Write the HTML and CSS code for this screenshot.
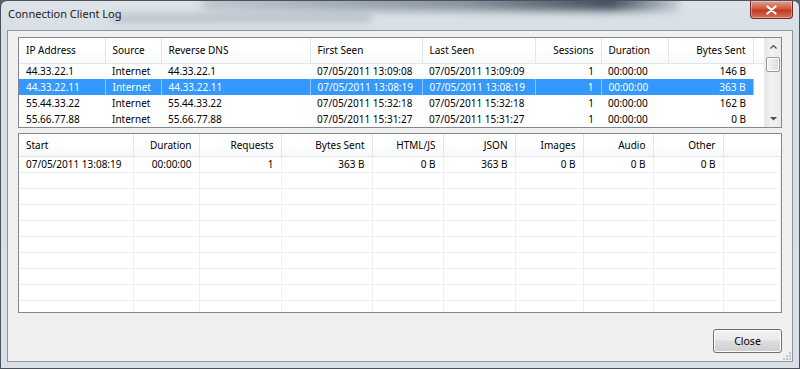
FILE: index.html
```html
<!DOCTYPE html>
<html lang="en">
<head>
    <meta charset="UTF-8">
    <title>Connection Client Log</title>
    <link rel="stylesheet" href="styles.css">
</head>
<body>
    <div class="window">
        <!-- things seen through the glass -->
        <div class="glass-behind"></div>
        <div class="glass-behind faint"></div>
        <div class="titlebar">
            <span class="title">Connection Client Log</span>
            <button class="close-x">
                <svg width="11" height="10" viewBox="0 0 11 10"><path d="M1.5 1.5 L9.5 8.5 M9.5 1.5 L1.5 8.5" stroke="#fff" stroke-width="2.2" stroke-linecap="round"/></svg>
            </button>
        </div>
        <div class="client">
            <div class="listview clients">
                <div class="list-body">
                    <table class="grid">
                        <colgroup>
                            <col style="width:86px"><col style="width:56px"><col style="width:149px"><col style="width:112px">
                            <col style="width:113px"><col style="width:66px"><col style="width:67px"><col style="width:85px"><col>
                        </colgroup>
                        <thead>
                            <tr>
                                <th>IP Address</th><th>Source</th><th>Reverse DNS</th><th>First Seen</th>
                                <th>Last Seen</th><th class="num">Sessions</th><th>Duration</th><th class="num">Bytes Sent</th><th class="fill"></th>
                            </tr>
                        </thead>
                        <tbody>
                            <tr>
                                <td>44.33.22.1</td><td>Internet</td><td>44.33.22.1</td><td>07/05/2011 13:09:08</td>
                                <td>07/05/2011 13:09:09</td><td class="num">1</td><td>00:00:00</td><td class="num">146 B</td><td></td>
                            </tr>
                            <tr class="selected">
                                <td>44.33.22.11</td><td>Internet</td><td>44.33.22.11</td><td>07/05/2011 13:08:19</td>
                                <td>07/05/2011 13:08:19</td><td class="num">1</td><td>00:00:00</td><td class="num">363 B</td><td class="fill"></td>
                            </tr>
                            <tr>
                                <td>55.44.33.22</td><td>Internet</td><td>55.44.33.22</td><td>07/05/2011 15:32:18</td>
                                <td>07/05/2011 15:32:18</td><td class="num">1</td><td>00:00:00</td><td class="num">162 B</td><td></td>
                            </tr>
                            <tr>
                                <td>55.66.77.88</td><td>Internet</td><td>55.66.77.88</td><td>07/05/2011 15:31:27</td>
                                <td>07/05/2011 15:31:27</td><td class="num">1</td><td>00:00:00</td><td class="num">0 B</td><td></td>
                            </tr>
                        </tbody>
                    </table>
                </div>
                <div class="vscroll">
                    <div class="arrow">
                        <svg width="7" height="4" viewBox="0 0 7 4"><path d="M0.5 3.5 L3.5 0.5 L6.5 3.5" fill="none" stroke="#4d4d4d" stroke-width="1.2"/></svg>
                    </div>
                    <div class="track">
                        <div class="thumb"></div>
                    </div>
                    <div class="arrow">
                        <svg width="7" height="4" viewBox="0 0 7 4"><path d="M0 0 L7 0 L3.5 3.5 Z" fill="#4d4d4d"/></svg>
                    </div>
                </div>
            </div>

            <div class="listview sessions">
                <table class="grid lines">
                    <colgroup>
                        <col style="width:114px"><col style="width:66px"><col style="width:82px"><col style="width:91px"><col style="width:71px">
                        <col style="width:72px"><col style="width:68px"><col style="width:70px"><col style="width:70px"><col>
                    </colgroup>
                    <thead>
                        <tr>
                            <th>Start</th><th class="num">Duration</th><th class="num">Requests</th><th class="num">Bytes Sent</th><th class="num">HTML/JS</th>
                            <th class="num">JSON</th><th class="num">Images</th><th class="num">Audio</th><th class="num">Other</th><th class="fill"></th>
                        </tr>
                    </thead>
                    <tbody>
                        <tr>
                            <td>07/05/2011 13:08:19</td><td class="num">00:00:00</td><td class="num">1</td><td class="num">363 B</td><td class="num">0 B</td>
                            <td class="num">363 B</td><td class="num">0 B</td><td class="num">0 B</td><td class="num">0 B</td><td></td>
                        </tr>
                        <tr><td></td><td></td><td></td><td></td><td></td><td></td><td></td><td></td><td></td><td></td></tr>
                        <tr><td></td><td></td><td></td><td></td><td></td><td></td><td></td><td></td><td></td><td></td></tr>
                        <tr><td></td><td></td><td></td><td></td><td></td><td></td><td></td><td></td><td></td><td></td></tr>
                        <tr><td></td><td></td><td></td><td></td><td></td><td></td><td></td><td></td><td></td><td></td></tr>
                        <tr><td></td><td></td><td></td><td></td><td></td><td></td><td></td><td></td><td></td><td></td></tr>
                        <tr><td></td><td></td><td></td><td></td><td></td><td></td><td></td><td></td><td></td><td></td></tr>
                        <tr><td></td><td></td><td></td><td></td><td></td><td></td><td></td><td></td><td></td><td></td></tr>
                        <tr><td></td><td></td><td></td><td></td><td></td><td></td><td></td><td></td><td></td><td></td></tr>
                        <tr><td></td><td></td><td></td><td></td><td></td><td></td><td></td><td></td><td></td><td></td></tr>
                    </tbody>
                </table>
            </div>

            <div class="buttons">
                <button class="push-btn">Close</button>
            </div>
            <svg class="grip" width="8" height="8" viewBox="0 0 8 8">
                <g fill="#c4c4c4">
                    <rect x="6" y="0" width="2" height="2"/>
                    <rect x="3" y="3" width="2" height="2"/><rect x="6" y="3" width="2" height="2"/>
                    <rect x="0" y="6" width="2" height="2"/><rect x="3" y="6" width="2" height="2"/><rect x="6" y="6" width="2" height="2"/>
                </g>
            </svg>
        </div>
    </div>
</body>
</html>
```

FILE: styles.css
```css
* {
    box-sizing: border-box;
}
html, body {
    margin: 0;
}
body {
    width: 800px;
    height: 369px;
    overflow: hidden;
    background: #59636d;
    font-family: "Noto Sans", "Open Sans", sans-serif;
    font-size: 10px;
    color: #000;
}

/* 窗口外框 (Aero) */
.window {
    position: relative;
    width: 800px;
    height: 369px;
    display: flex;
    flex-direction: column;
    padding: 0 6px 6px 6px;
    border: 1px solid #4a535c;
    border-radius: 7px 7px 0 0;
    background: linear-gradient(#dde3e9, #d6dde4 40px, #d9dfe5);
    overflow: hidden;
}
.glass-behind {
    position: absolute;
    left: 200px;
    top: -8px;
    width: 480px;
    height: 18px;
    background: linear-gradient(90deg, rgba(80,96,110,0.2), rgba(50,66,82,0.5) 55%, rgba(36,52,68,0.85) 85%, rgba(40,56,72,0.1));
    filter: blur(4px);
    border-radius: 8px;
}
.glass-behind.faint {
    left: 110px;
    top: 12px;
    width: 260px;
    height: 10px;
    background: rgba(120,130,140,0.25);
    filter: blur(3px);
}
.titlebar {
    position: relative;
    height: 29px;
    display: flex;
    align-items: flex-start;
    justify-content: space-between;
}
.title {
    margin: 5px 0 0 1px;
    font-size: 11px;
    color: #1b1b1b;
}
.close-x {
    width: 43px;
    height: 18px;
    padding: 0;
    display: flex;
    align-items: center;
    justify-content: center;
    border: 1px solid #6e2a26;
    border-top: none;
    border-radius: 0 0 4px 4px;
    background: linear-gradient(#e2a08f, #d2583f 45%, #c03a26 55%, #d77259);
    box-shadow: inset 0 0 0 1px rgba(255,255,255,0.35);
}

/* 客户区 */
.client {
    position: relative;
    flex: 1;
    display: flex;
    flex-direction: column;
    padding: 6px 10px 0 10px;
    background: #f0f0f0;
    border: 1px solid #8d969f;
}

.listview {
    border: 1px solid #828790;
    background: #fff;
    overflow: hidden;
}
.clients {
    height: 91px;
    display: flex;
}
.list-body {
    flex: 1;
    overflow: hidden;
}
.sessions {
    height: 180px;
    margin-top: 5px;
}

.grid {
    width: 100%;
    border-collapse: collapse;
    table-layout: fixed;
}
.grid th {
    height: 25px;
    padding: 0 7px;
    font-weight: normal;
    text-align: left;
    white-space: nowrap;
    background: linear-gradient(#fff, #fff 50%, #f7f8fa);
    border-right: 1px solid #e3e5e8;
    border-bottom: 1px solid #e5e5e5;
}
.sessions .grid th {
    height: 22px;
}
.grid th.fill {
    border-right: none;
}
.grid td {
    height: 16px;
    padding: 0 7px;
    line-height: 15px;
    white-space: nowrap;
    overflow: hidden;
}
.grid .num {
    text-align: right;
}
.grid tr.selected td {
    background: #3399ff;
    color: #fff;
    border-right: 1px solid #8ec5fb;
}
.grid tr.selected td:nth-child(7) {
    border-right-color: #3399ff;
}
.grid tr.selected td.fill {
    background: #fff;
    border-right: none;
}
.lines td {
    border-right: 1px solid #f0f0f0;
    border-bottom: 1px solid #f0f0f0;
}

/* 滚动条 */
.vscroll {
    width: 17px;
    display: flex;
    flex-direction: column;
    background: linear-gradient(90deg, #e6e6e6, #f2f2f2 40%, #ebebeb);
    border-left: 1px solid #ececec;
}
.arrow {
    height: 17px;
    display: flex;
    align-items: center;
    justify-content: center;
}
.track {
    flex: 1;
    padding: 2px 1px 0 1px;
}
.thumb {
    height: 15px;
    border: 1px solid #9a9a9a;
    border-radius: 2px;
    background: linear-gradient(90deg, #f3f3f3, #e9e9e9 50%, #d9d9d9);
    box-shadow: inset 0 0 0 1px #fff;
}

/* 按钮 */
.buttons {
    display: flex;
    justify-content: flex-end;
    margin-top: 16px;
}
.push-btn {
    width: 69px;
    height: 24px;
    padding: 0;
    font-family: inherit;
    font-size: 10.5px;
    color: #000;
    border: 1px solid #707070;
    border-radius: 3px;
    background: linear-gradient(#f2f2f2, #ebebeb 45%, #dddddd 50%, #cfcfcf);
    box-shadow: inset 0 0 0 1px #fcfcfc;
}
.grip {
    position: absolute;
    right: 1px;
    bottom: 1px;
}
```
